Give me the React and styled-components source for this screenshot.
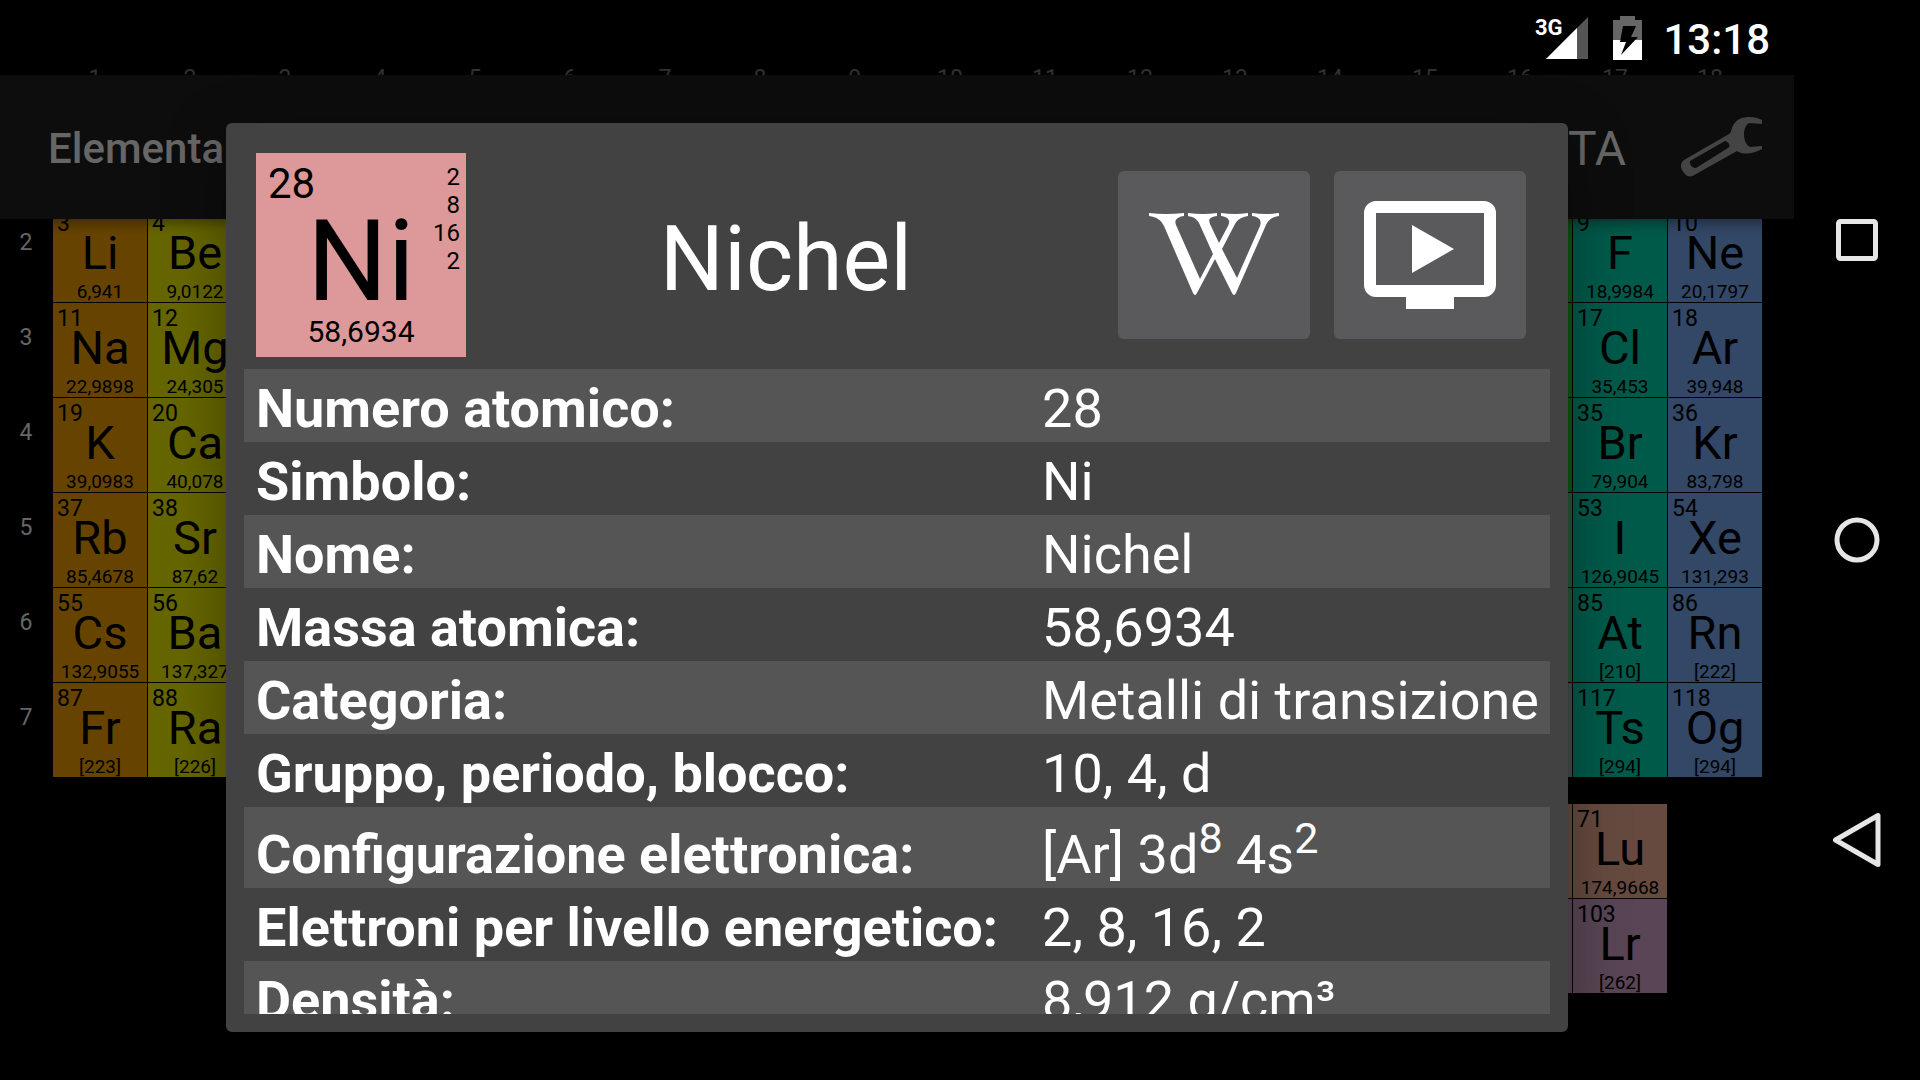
import React from "react";
import styled, { createGlobalStyle, css } from "styled-components";

const GlobalStyle = createGlobalStyle`
  * { box-sizing: border-box; }
  html, body { margin: 0; height: 100%; background: #000; }
  #root { height: 100%; }
  body { font-family: Roboto, "Noto Sans", sans-serif; color: #fff; overflow: hidden; }
`;

const Device = styled.div`
  display: flex;
  height: 100vh;
  background: #000;
`;

const Screen = styled.main`
  position: relative;
  flex: 1;
  min-width: 0;
  overflow: hidden;
`;

/* ---- periodic table ---- */
const Periodic = styled.div`
  display: grid;
  grid-template-columns: 52px repeat(18, 1fr);
  grid-template-rows: 68px repeat(7, 94px) 25px repeat(2, 94px);
  gap: 1px;
  padding: 44px 32px 0 0;
`;

const AxisLabel = styled.span`
  color: #666;
  font-size: 23px;
  line-height: 70px;
  text-align: center;
  grid-row: ${(p) => p.$row};
  grid-column: ${(p) => p.$col};
  ${(p) => p.$top && css`padding-right: 10px;`}
`;

const Cell = styled.div`
  display: flex;
  flex-direction: column;
  min-width: 0;
  color: #000;
  white-space: nowrap;
  text-align: center;
  background: ${(p) => p.$color};
  grid-row: ${(p) => p.$row};
  grid-column: ${(p) => p.$col};
`;

const CellNumber = styled.span`
  padding-left: 4px;
  text-align: left;
  font-size: 23px;
  line-height: 32px;
`;

const CellSymbol = styled.span`
  font-size: 47px;
  line-height: 26px;
`;

const CellMass = styled.span`
  margin-top: auto;
  font-size: 19px;
  line-height: 21px;
`;

/* ---- bars ---- */
const StatusBar = styled.header`
  position: absolute;
  inset: 0 0 auto 0;
  display: flex;
  align-items: center;
  justify-content: flex-end;
  height: 75px;
  padding-right: 24px;
  background: rgba(0, 0, 0, 0.5);
`;

const Clock = styled.time`
  margin-left: 20px;
  padding-top: 4px;
  font-size: 42px;
  font-weight: 500;
  line-height: 72px;
`;

const SignalIcon = styled.svg`
  width: 54px;
  height: 46px;
  margin-right: 24px;
`;

const BatteryIcon = styled.svg`
  width: 30px;
  height: 46px;
`;

const ActionBar = styled.div`
  position: absolute;
  inset: 75px 0 auto 0;
  display: flex;
  align-items: center;
  height: 144px;
  padding: 0 30px 0 48px;
  background: #0d0d0d;
  color: #666;
  box-shadow: 0 4px 12px rgba(0, 0, 0, 0.4);
`;

const AppTitle = styled.h1`
  flex: 1;
  margin: 0;
  padding-top: 4px;
  font-size: 42px;
  font-weight: 500;
  line-height: 48px;
`;

const TextButton = styled.button`
  padding: 4px 0 0;
  border: 0;
  background: none;
  color: inherit;
  font: 400 48px/48px Roboto, sans-serif;
`;

const IconButton = styled.button`
  display: flex;
  margin-left: 54px;
  padding: 0;
  border: 0;
  background: none;
`;

const NavBar = styled.nav`
  display: flex;
  flex-direction: column;
  justify-content: center;
  width: 126px;
`;

const NavButton = styled.button`
  display: flex;
  align-items: center;
  justify-content: center;
  height: 300px;
  padding: 0;
  border: 0;
  background: none;
`;

/* ---- dialog ---- */
const Overlay = styled.div`
  position: absolute;
  inset: 75px 0 0 0;
  display: flex;
  padding: 48px 226px;
`;

const Dialog = styled.section`
  display: flex;
  flex-direction: column;
  flex: 1;
  min-width: 0;
  padding: 18px;
  border-radius: 6px;
  background: #424242;
  box-shadow: 0 18px 60px rgba(0, 0, 0, 0.35);
`;

const DialogHeader = styled.div`
  display: flex;
  align-items: center;
  padding: 12px 24px 12px 12px;
`;

const Card = styled.div`
  display: grid;
  width: 210px;
  height: 204px;
  background: #dd9999;
  color: #000;
`;

const CardMain = styled.div`
  display: flex;
  flex-direction: column;
  grid-area: 1 / 1;
  text-align: center;
`;

const CardNumber = styled.span`
  padding-left: 12px;
  text-align: left;
  font-size: 42px;
  line-height: 62px;
`;

const CardSymbol = styled.span`
  font-size: 113px;
  line-height: 94px;
`;

const CardMass = styled.span`
  font-size: 30px;
  line-height: 46px;
`;

const Shells = styled.ul`
  grid-area: 1 / 1;
  justify-self: end;
  margin: 0;
  padding: 10px 6px 0 0;
  list-style: none;
  text-align: right;
  font-size: 24px;
  line-height: 28px;
`;

const ElementName = styled.h2`
  flex: 1;
  margin: 0;
  padding-top: 10px;
  text-align: center;
  font-size: 90px;
  font-weight: 400;
  line-height: 96px;
`;

const LinkButton = styled.button`
  display: flex;
  align-items: center;
  justify-content: center;
  width: 192px;
  height: 168px;
  margin-left: 12px;
  padding: 0;
  border: 0;
  border-radius: 6px;
  background: #5a5a5c;
  & + & { margin-left: 24px; }
`;

const Scroller = styled.div`
  flex: 1;
  min-height: 0;
  overflow: hidden;
`;

const Facts = styled.table`
  width: 100%;
  border-collapse: collapse;
  font-size: 54px;
  line-height: 67px;
  white-space: nowrap;
  text-align: left;
`;

const FactRow = styled.tr`
  &:nth-child(odd) { background: #555; }
  && > * { padding-top: ${(p) => (p.$tall ? 14 : 6)}px; }
`;

const FactLabel = styled.th`
  width: 1px;
  padding: 0 32px 0 12px;
  font-weight: 700;
`;

const FactValue = styled.td`
  padding: 0 12px;
`;

const Sup = styled.sup`
  position: relative;
  top: -20px;
  vertical-align: baseline;
  font-size: 43px;
  line-height: 0;
`;

const ORANGE = "#664400";
const YELLOW = "#666600";
const GREEN = "#115511";
const METALLOID = "#2a5236";
const TEAL = "#005a4a";
const BLUE = "#334766";
const GREY = "#404c48";
const BROWN = "#664a3f";
const MAUVE = "#594555";

/* [row, column, number, symbol, mass, colour]; rows 9 and 10 hold the f-block */
const ELEMENTS = [
  [2, 1, 3, "Li", "6,941", ORANGE],
  [2, 2, 4, "Be", "9,0122", YELLOW],
  [3, 1, 11, "Na", "22,9898", ORANGE],
  [3, 2, 12, "Mg", "24,305", YELLOW],
  [4, 1, 19, "K", "39,0983", ORANGE],
  [4, 2, 20, "Ca", "40,078", YELLOW],
  [5, 1, 37, "Rb", "85,4678", ORANGE],
  [5, 2, 38, "Sr", "87,62", YELLOW],
  [6, 1, 55, "Cs", "132,9055", ORANGE],
  [6, 2, 56, "Ba", "137,327", YELLOW],
  [7, 1, 87, "Fr", "[223]", ORANGE],
  [7, 2, 88, "Ra", "[226]", YELLOW],
  [2, 17, 9, "F", "18,9984", TEAL],
  [2, 18, 10, "Ne", "20,1797", BLUE],
  [3, 17, 17, "Cl", "35,453", TEAL],
  [3, 18, 18, "Ar", "39,948", BLUE],
  [4, 17, 35, "Br", "79,904", TEAL],
  [4, 18, 36, "Kr", "83,798", BLUE],
  [5, 17, 53, "I", "126,9045", TEAL],
  [5, 18, 54, "Xe", "131,293", BLUE],
  [6, 17, 85, "At", "[210]", TEAL],
  [6, 18, 86, "Rn", "[222]", BLUE],
  [7, 17, 117, "Ts", "[294]", TEAL],
  [7, 18, 118, "Og", "[294]", BLUE],
  [9, 17, 71, "Lu", "174,9668", BROWN],
  [10, 17, 103, "Lr", "[262]", MAUVE],
];

const COLUMN_16 = [
  [2, GREEN],
  [3, GREEN],
  [4, GREEN],
  [5, METALLOID],
  [6, METALLOID],
  [7, GREY],
  [9, BROWN],
  [10, MAUVE],
];

const FACTS = [
  ["Numero atomico:", "28"],
  ["Simbolo:", "Ni"],
  ["Nome:", "Nichel"],
  ["Massa atomica:", "58,6934"],
  ["Categoria:", "Metalli di transizione"],
  ["Gruppo, periodo, blocco:", "10, 4, d"],
  ["Configurazione elettronica:", <>[Ar] 3d<Sup>8</Sup> 4s<Sup>2</Sup></>, true],
  ["Elettroni per livello energetico:", "2, 8, 16, 2"],
  ["Densità:", "8,912 g/cm³"],
];

function Table() {
  return (
    <Periodic>
      {Array.from({ length: 18 }, (_, i) => (
        <AxisLabel key={`c${i}`} $row={1} $col={i + 2} $top>{i + 1}</AxisLabel>
      ))}
      {[2, 3, 4, 5, 6, 7].map((n) => (
        <AxisLabel key={n} $row={n + 1} $col={1}>{n}</AxisLabel>
      ))}
      {COLUMN_16.map(([row, color]) => (
        <Cell key={row} $row={row + 1} $col={17} $color={color} />
      ))}
      {ELEMENTS.map(([row, col, number, symbol, mass, color]) => (
        <Cell key={number} $row={row + 1} $col={col + 1} $color={color}>
          <CellNumber>{number}</CellNumber>
          <CellSymbol>{symbol}</CellSymbol>
          <CellMass>{mass}</CellMass>
        </Cell>
      ))}
    </Periodic>
  );
}

const Signal = () => (
  <SignalIcon viewBox="0 0 54 46">
    <path d="M53 2V44H11Z" fill="#555" />
    <path d="M42 13V44H11Z" fill="#fff" />
    <text x="0" y="20" fill="#fff" fontSize="22" fontWeight="700" fontFamily="Roboto, sans-serif">3G</text>
  </SignalIcon>
);

const Battery = () => (
  <BatteryIcon viewBox="0 0 30 46">
    <path d="M7 1H22V5H29V25H0V5H7Z" fill="#666" />
    <path d="M0 25H29V45H0Z" fill="#fff" />
    <path d="M10 11H23L18 22H25L8 40L13 27H7Z" fill="#000" />
  </BatteryIcon>
);

const Wrench = () => (
  <svg width="84" height="62" viewBox="0 0 84 62">
    <path
      fill="#444"
      fillRule="evenodd"
      d="M82 4C74 0 60 -1 54 8C51 12 52 16 49 18L4 44C-1 48 1 53 4 57C8 62 12 61 16 58L57 35C64 40 75 37 82 33V30L70 31C66 29 64 24 64 18C64 13 66 9 69 7L82 8ZM45 25C49 26 51 30 48 32L16 52C12 52 9 48 10 45Z"
    />
  </svg>
);

const WikiW = () => (
  <svg width="132" height="84" viewBox="0 0 132 84" fill="#fff">
    <path d="M1 0Q18 2 36 0V3C29 4 26 7 28 12L52 66L65 41L51 10C48 5 45 4 40 3V0Q55 2 69 0V3C62 4 60 6 62 11L71 30L80 13C83 7 80 4 73 3V0Q87 2 100 0V3C94 4 90 6 87 11L74 36L89 65L112 13C114 7 111 4 104 3V0Q118 2 131 0V3C124 4 120 7 118 12L88 80Q86 84 84 80L67 46L49 80Q47 84 45 80L16 13C13 7 9 4 1 3Z" />
  </svg>
);

const Tv = () => (
  <svg width="132" height="108" viewBox="0 0 132 108">
    <path
      fill="#fff"
      fillRule="evenodd"
      d="M12 0H120A12 12 0 0 1 132 12V84A12 12 0 0 1 120 96H90V108H42V96H12A12 12 0 0 1 0 84V12A12 12 0 0 1 12 0ZM12 12V84H120V12ZM48 24L90 48L48 72Z"
    />
  </svg>
);

export default function App() {
  return (
    <Device>
      <GlobalStyle />
      <Screen>
        <Table />
        <StatusBar>
          <Signal />
          <Battery />
          <Clock>13:18</Clock>
        </StatusBar>
        <ActionBar>
          <AppTitle>Elementa</AppTitle>
          <TextButton>TA</TextButton>
          <IconButton aria-label="Impostazioni"><Wrench /></IconButton>
        </ActionBar>
        <Overlay>
          <Dialog role="dialog" aria-labelledby="element-name">
            <DialogHeader>
              <Card>
                <CardMain>
                  <CardNumber>28</CardNumber>
                  <CardSymbol>Ni</CardSymbol>
                  <CardMass>58,6934</CardMass>
                </CardMain>
                <Shells>
                  <li>2</li>
                  <li>8</li>
                  <li>16</li>
                  <li>2</li>
                </Shells>
              </Card>
              <ElementName id="element-name">Nichel</ElementName>
              <LinkButton aria-label="Wikipedia"><WikiW /></LinkButton>
              <LinkButton aria-label="Video"><Tv /></LinkButton>
            </DialogHeader>
            <Scroller>
              <Facts>
                <tbody>
                  {FACTS.map(([label, value, tall]) => (
                    <FactRow key={label} $tall={tall}>
                      <FactLabel scope="row">{label}</FactLabel>
                      <FactValue>{value}</FactValue>
                    </FactRow>
                  ))}
                </tbody>
              </Facts>
            </Scroller>
          </Dialog>
        </Overlay>
      </Screen>
      <NavBar>
        <NavButton aria-label="Recenti">
          <svg width="42" height="42" viewBox="0 0 42 42" fill="none" stroke="#e6e6e6" strokeWidth="5">
            <rect x="2.5" y="2.5" width="37" height="37" rx="2" />
          </svg>
        </NavButton>
        <NavButton aria-label="Home">
          <svg width="46" height="46" viewBox="0 0 46 46" fill="none" stroke="#e6e6e6" strokeWidth="5">
            <circle cx="23" cy="23" r="20" />
          </svg>
        </NavButton>
        <NavButton aria-label="Indietro">
          <svg width="50" height="56" viewBox="0 0 50 56" fill="none" stroke="#e6e6e6" strokeWidth="5" strokeLinejoin="round">
            <path d="M46 3.5V52.5L3.5 28Z" />
          </svg>
        </NavButton>
      </NavBar>
    </Device>
  );
}
